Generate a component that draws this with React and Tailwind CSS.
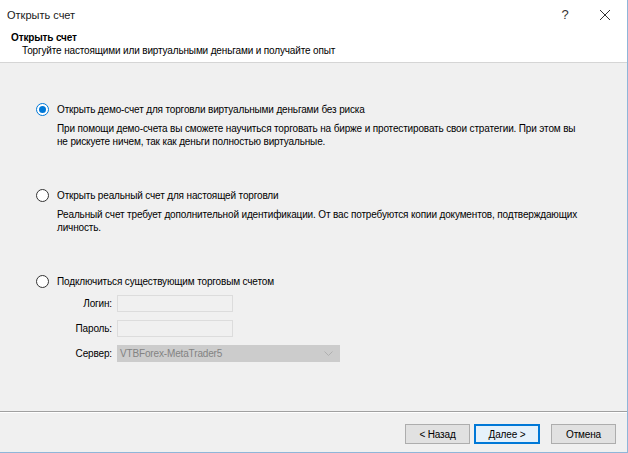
import React, { useState } from 'react';

const Radio = ({ checked }) => (
  <span
    className={`flex h-[13px] w-[13px] shrink-0 items-center justify-center rounded-full border bg-white ${
      checked ? 'border-[#0078d7]' : 'border-[#333333]'
    }`}
  >
    {checked && <span className="h-[7px] w-[7px] rounded-full bg-[#0078d7]" />}
  </span>
);

const Option = ({ id, selected, setSelected, label, children }) => (
  <div>
    <label className="flex items-center gap-[8px] cursor-default" onClick={() => setSelected(id)}>
      <Radio checked={selected === id} />
      <span>{label}</span>
    </label>
    {children}
  </div>
);

const Field = ({ label, children }) => (
  <div className="flex items-center">
    <span className="w-[56px] text-right pr-[5px]">{label}</span>
    {children}
  </div>
);

export default function App() {
  const [selected, setSelected] = useState('demo');

  return (
    <div
      className="flex h-[453px] w-[628px] flex-col overflow-hidden border-r border-b border-[#8fb6d9] bg-[#f0f0f0] text-[10px] tracking-[-0.15px] text-black"
      style={{ fontFamily: 'Tahoma, "Liberation Sans", Arial, sans-serif' }}
    >
      {/* Title bar */}
      <div className="flex h-[30px] items-center bg-white pl-[7px]">
        <span className="text-[11px] tracking-normal text-[#1a1a1a]">Открыть счет</span>
        <div className="ml-auto flex items-center">
          <span className="w-[36px] text-center text-[13px] text-[#333]">?</span>
          <svg width="44" height="30" viewBox="0 0 44 30">
            <path d="M17 10 L27 20 M27 10 L17 20" stroke="#333" strokeWidth="1" />
          </svg>
        </div>
      </div>

      {/* Wizard header */}
      <div className="h-[33px] border-b border-[#d5d5d5] bg-white pl-[11px] pt-px leading-[13px]">
        <div className="font-bold">Открыть счет</div>
        <div className="pl-[11px]">Торгуйте настоящими или виртуальными деньгами и получайте опыт</div>
      </div>

      {/* Options */}
      <div className="flex flex-1 flex-col gap-[41px] pl-[36px] pt-[40px] leading-[13px]">
        <Option id="demo" selected={selected} setSelected={setSelected} label="Открыть демо-счет для торговли виртуальными деньгами без риска">
          <p className="mt-[6px] w-[545px] pl-[21px]">
            При помощи демо-счета вы сможете научиться торговать на бирже и протестировать свои стратегии. При этом вы не рискуете ничем, так как деньги полностью виртуальные.
          </p>
        </Option>

        <Option id="real" selected={selected} setSelected={setSelected} label="Открыть реальный счет для настоящей торговли">
          <p className="mt-[6px] w-[545px] pl-[21px]">
            Реальный счет требует дополнительной идентификации. От вас потребуются копии документов, подтверждающих личность.
          </p>
        </Option>

        <Option id="existing" selected={selected} setSelected={setSelected} label="Подключиться существующим торговым счетом">
          <div className="mt-[7px] flex flex-col gap-[8px] pl-[25px]">
            <Field label="Логин:">
              <div className="h-[17px] w-[116px] border border-[#dcdcdc] bg-[#f0f0f0]" />
            </Field>
            <Field label="Пароль:">
              <div className="h-[17px] w-[116px] border border-[#dcdcdc] bg-[#f0f0f0]" />
            </Field>
            <Field label="Сервер:">
              <div className="flex h-[17px] w-[223px] items-center justify-between border border-[#cccccc] bg-[#cccccc] pl-[2px] pr-[6px] text-[#838383]">
                <span>VTBForex-MetaTrader5</span>
                <svg width="9" height="5" viewBox="0 0 9 5">
                  <path d="M0.5 0.5 L4.5 4.5 L8.5 0.5" stroke="#b0b0b0" fill="none" />
                </svg>
              </div>
            </Field>
          </div>
        </Option>
      </div>

      {/* Footer buttons */}
      <div className="h-[41px] border-t border-[#a0a0a0] shadow-[inset_0_1px_0_#ffffff]">
        <div className="flex justify-end gap-[4px] pr-[11px] pt-[12px]">
          <button className="h-[20px] w-[65px] border border-[#adadad] bg-[#e1e1e1]">&lt; Назад</button>
          <button className="h-[20px] w-[66px] border border-[#0078d7] bg-[#e5f1fb] shadow-[inset_0_0_0_1px_#0078d7]">Далее &gt;</button>
          <button className="ml-[7px] h-[20px] w-[65px] border border-[#adadad] bg-[#e1e1e1]">Отмена</button>
        </div>
      </div>
    </div>
  );
}
